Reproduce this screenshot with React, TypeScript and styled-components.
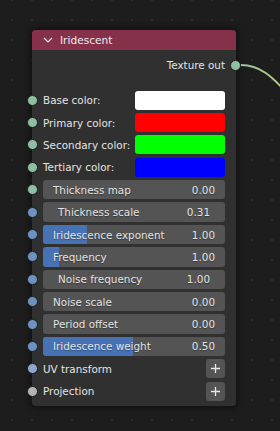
import styled, { createGlobalStyle } from 'styled-components'

const GlobalStyle = createGlobalStyle`
  html, body {
    margin: 0;
    padding: 0;
    background: #1d1d1d;
  }
  body {
    width: 280px;
    height: 431px;
    overflow: hidden;
    font-family: "DejaVu Sans", "Liberation Sans", sans-serif;
  }
`

const Canvas = styled.div`
  position: relative;
  width: 280px;
  height: 431px;
  padding: 30px 0 0 32px;
  box-sizing: border-box;
  background-color: #1d1d1d;
  background-image: radial-gradient(circle, #2c2c2c 1px, transparent 1.2px);
  background-size: 20px 20px;
  background-position: 2px 10px;
`

const Wire = styled.svg`
  position: absolute;
  left: 0;
  top: 0;
  pointer-events: none;
`

const Node = styled.div`
  position: relative;
  width: 204px;
  border-radius: 4px;
  background: #303030;
  box-shadow: 0 0 6px 2px rgba(0, 0, 0, 0.45);
  color: #e4e4e4;
  font-size: 10.4px;
`

const Header = styled.div`
  display: flex;
  align-items: center;
  gap: 7px;
  height: 20px;
  padding-left: 11px;
  background: #86314a;
  border-radius: 4px 4px 0 0;
  font-size: 10.6px;
  color: #ececec;
`

const Body = styled.div`
  display: flex;
  flex-direction: column;
  padding: 5px 11px 5px 11px;
`

const OutputRow = styled.div`
  position: relative;
  display: flex;
  justify-content: flex-end;
  align-items: center;
  height: 20px;
  margin-bottom: 15.5px;
`

const Inputs = styled.div`
  display: flex;
  flex-direction: column;
  gap: 3px;
`

const Row = styled.div`
  position: relative;
  display: flex;
  align-items: center;
  height: 19.4px;
`

const Socket = styled.span<{ $color: string; $side: 'left' | 'right' }>`
  position: absolute;
  top: 50%;
  ${({ $side }) => ($side === 'left' ? 'left: -16px;' : 'right: -16px;')}
  width: 9px;
  height: 9px;
  margin-top: -5.5px;
  border-radius: 50%;
  background: ${({ $color }) => $color};
  border: 1px solid #1e1e1e;
`

const Label = styled.span`
  flex: 1;
  white-space: nowrap;
`

const Swatch = styled.div<{ $color: string }>`
  width: 90px;
  height: 19px;
  border-radius: 3px;
  background: ${({ $color }) => $color};
`

const Field = styled.div<{ $inset: number }>`
  position: relative;
  flex: 1;
  display: flex;
  align-items: center;
  justify-content: space-between;
  height: 19.4px;
  padding: 0 ${({ $inset }) => $inset}px;
  border-radius: 3px;
  background: #545454;
  overflow: hidden;
  white-space: nowrap;
`

const Fill = styled.div`
  position: absolute;
  left: 0;
  top: 0;
  bottom: 0;
  background: #4772b3;
`

const FieldText = styled.span`
  position: relative;
  text-shadow: 0 1px 1px rgba(0, 0, 0, 0.35);
`

const PlusButton = styled.div`
  display: flex;
  align-items: center;
  justify-content: center;
  width: 19px;
  height: 19px;
  border-radius: 3px;
  background: #545454;
`

const GREEN = '#8fbfa3'
const BLUE = '#6d92bf'

const colors = [
  { label: 'Base color:', color: '#ffffff' },
  { label: 'Primary color:', color: '#ff0000' },
  { label: 'Secondary color:', color: '#00ff00' },
  { label: 'Tertiary color:', color: '#0000ff' },
]

const fields = [
  { label: 'Thickness map', value: '0.00', inset: 10, fill: 0, socket: GREEN },
  { label: 'Thickness scale', value: '0.31', inset: 15, fill: 0, socket: BLUE },
  { label: 'Iridescence exponent', value: '1.00', inset: 10, fill: 44, socket: BLUE },
  { label: 'Frequency', value: '1.00', inset: 10, fill: 16, socket: BLUE },
  { label: 'Noise frequency', value: '1.00', inset: 15, fill: 0, socket: BLUE },
  { label: 'Noise scale', value: '0.00', inset: 10, fill: 0, socket: BLUE },
  { label: 'Period offset', value: '0.00', inset: 10, fill: 0, socket: BLUE },
  { label: 'Iridescence weight', value: '0.50', inset: 10, fill: 90, socket: BLUE },
]

const Chevron = () => (
  <svg width="10" height="6" viewBox="0 0 10 6">
    <path d="M1 1 L5 5 L9 1" fill="none" stroke="#e8e8e8" strokeWidth="1.2" />
  </svg>
)

const Plus = () => (
  <svg width="11" height="11" viewBox="0 0 11 11">
    <path d="M5.5 1 V10 M1 5.5 H10" stroke="#e8e8e8" strokeWidth="1.3" />
  </svg>
)

const App = () => (
  <>
    <GlobalStyle />
    <Canvas>
      <Node>
        <Header>
          <Chevron />
          Iridescent
        </Header>
        <Body>
          <OutputRow>
            Texture out
            <Socket $color={GREEN} $side="right" />
          </OutputRow>
          <Inputs>
            {colors.map(c => (
              <Row key={c.label}>
                <Socket $color={GREEN} $side="left" />
                <Label>{c.label}</Label>
                <Swatch $color={c.color} />
              </Row>
            ))}
            {fields.map(f => (
              <Row key={f.label}>
                <Socket $color={f.socket} $side="left" />
                <Field $inset={f.inset}>
                  {f.fill > 0 && <Fill style={{ width: f.fill }} />}
                  <FieldText>{f.label}</FieldText>
                  <FieldText>{f.value}</FieldText>
                </Field>
              </Row>
            ))}
            <Row>
              <Socket $color="#8ca8cf" $side="left" />
              <Label>UV transform</Label>
              <PlusButton>
                <Plus />
              </PlusButton>
            </Row>
            <Row>
              <Socket $color="#b4b4b4" $side="left" />
              <Label>Projection</Label>
              <PlusButton>
                <Plus />
              </PlusButton>
            </Row>
          </Inputs>
        </Body>
      </Node>
      <Wire width="280" height="431">
        <defs>
          <linearGradient id="wire" x1="236" y1="0" x2="290" y2="0" gradientUnits="userSpaceOnUse">
            <stop offset="0" stopColor="#8fbfa3" />
            <stop offset="1" stopColor="#c4d874" />
          </linearGradient>
        </defs>
        <path d="M241 65 C 258 65, 272 74, 292 100" fill="none" stroke="url(#wire)" strokeWidth="1.8" />
      </Wire>
    </Canvas>
  </>
)

export default App
